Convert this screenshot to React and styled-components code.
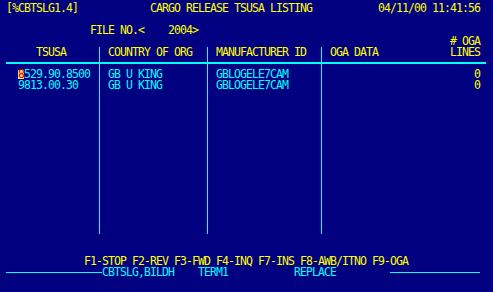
import styled, { createGlobalStyle } from 'styled-components';

const NAVY = '#000080';
const YELLOW = '#ffff00';
const CYAN = '#00ffff';

const GlobalStyle = createGlobalStyle`
  html, body {
    margin: 0;
    padding: 0;
    background: ${NAVY};
  }
`;

const Screen = styled.div`
  width: 493px;
  height: 292px;
  overflow: hidden;
  box-sizing: border-box;
  padding-top: 3px;
  background: ${NAVY};
  font-family: "DejaVu Sans Mono", "Liberation Mono", monospace;
  font-size: 11.5px;
  letter-spacing: -0.9236px;
  line-height: 11px;
  display: flex;
  flex-direction: column;
`;

const Line = styled.div`
  height: 11px;
  white-space: pre;
  color: ${p => p.$color || YELLOW};
  text-align: ${p => (p.$right ? 'right' : 'left')};
  padding-right: ${p => (p.$right ? '13px' : '0')};
`;

const Blank = styled.div`
  height: ${p => p.$rows * 11}px;
  flex-shrink: 0;
`;

const Table = styled.div`
  display: grid;
  grid-template-columns: 100px 108px 114px 1fr;
  height: 187px;
  flex-shrink: 0;
`;

const Column = styled.div`
  display: flex;
  flex-direction: column;
  box-sizing: border-box;
  border-right: ${p => (p.$last ? 'none' : `1px solid ${CYAN}`)};
`;

const Cell = styled.div`
  height: 11px;
  white-space: pre;
  color: ${p => p.$color || CYAN};
  padding-left: ${p => p.$pad || 0}px;
  padding-right: ${p => p.$padRight || 0}px;
  display: ${p => (p.$split ? 'flex' : 'block')};
  justify-content: space-between;
  text-align: ${p => (p.$right ? 'right' : 'left')};
`;

const RuleRow = styled.div`
  height: 11px;
  box-sizing: border-box;
  padding-top: 4px;
`;

const Rule = styled.div`
  height: 2px;
  background: ${CYAN};
  margin-left: ${p => p.$left || 0}px;
  margin-right: ${p => p.$right || 0}px;
`;

const Cursor = styled.span`
  display: inline-block;
  height: 11px;
  color: #e00000;
  background: linear-gradient(
    to bottom,
    transparent 1px,
    #f4e47c 1px,
    #f4e47c 10px,
    transparent 10px
  );
`;

const StatusLine = styled.div`
  height: 11px;
  display: flex;
  align-items: center;
  white-space: pre;
  color: ${CYAN};
`;

const StatusRule = styled.div`
  height: 1px;
  flex-shrink: 0;
  width: ${p => p.$width}px;
  margin-left: ${p => p.$left}px;
  background: ${CYAN};
`;

const rows = [
  { tsusa: '8529.90.8500', country: 'GB U KING', mfr: 'GBLOGELE7CAM', lines: '0', cursor: true },
  { tsusa: '9813.00.30', country: 'GB U KING', mfr: 'GBLOGELE7CAM', lines: '0' },
];

const EMPTY_ROWS = 15;

function fill(list, render) {
  const out = list.map(render);
  for (let i = list.length; i < EMPTY_ROWS; i++) out.push(<Cell key={'e' + i} />);
  return out;
}

export default function App() {
  return (
    <>
      <GlobalStyle />
      <Screen>
        <Line>{' [%CBTSLG1.4]            CARGO RELEASE TSUSA LISTING           04/11/00 11:41:56'}</Line>
        <Blank $rows={1} />
        <Line>{'               FILE NO.<    2004>'}</Line>
        <Line $right># OGA</Line>

        <Table>
          <Column>
            <Cell $color={YELLOW} $pad={36}>TSUSA</Cell>
            <RuleRow><Rule $left={6} /></RuleRow>
            {fill(rows, (r, i) => (
              <Cell key={i} $pad={18}>
                {r.cursor ? (
                  <>
                    <Cursor>{r.tsusa[0]}</Cursor>
                    {r.tsusa.slice(1)}
                  </>
                ) : r.tsusa}
              </Cell>
            ))}
          </Column>
          <Column>
            <Cell $color={YELLOW} $pad={8}>COUNTRY OF ORG</Cell>
            <RuleRow><Rule /></RuleRow>
            {fill(rows, (r, i) => <Cell key={i} $pad={8}>{r.country}</Cell>)}
          </Column>
          <Column>
            <Cell $color={YELLOW} $pad={8}>MANUFACTURER ID</Cell>
            <RuleRow><Rule /></RuleRow>
            {fill(rows, (r, i) => <Cell key={i} $pad={8}>{r.mfr}</Cell>)}
          </Column>
          <Column $last>
            <Cell $color={YELLOW} $pad={8} $padRight={13} $split>
              <span>OGA DATA</span>
              <span>LINES</span>
            </Cell>
            <RuleRow><Rule $right={7} /></RuleRow>
            {fill(rows, (r, i) => (
              <Cell key={i} $color={YELLOW} $padRight={13} $right>{r.lines}</Cell>
            ))}
          </Column>
        </Table>

        <Blank $rows={2} />
        <Line>{'              F1-STOP F2-REV F3-FWD F4-INQ F7-INS F8-AWB/ITNO F9-OGA'}</Line>
        <StatusLine>
          <StatusRule $left={6} $width={96} />
          <span>{'CBTSLG,BILDH    TERM1           REPLACE'}</span>
          <StatusRule $left={54} $width={90} />
        </StatusLine>
      </Screen>
    </>
  );
}
